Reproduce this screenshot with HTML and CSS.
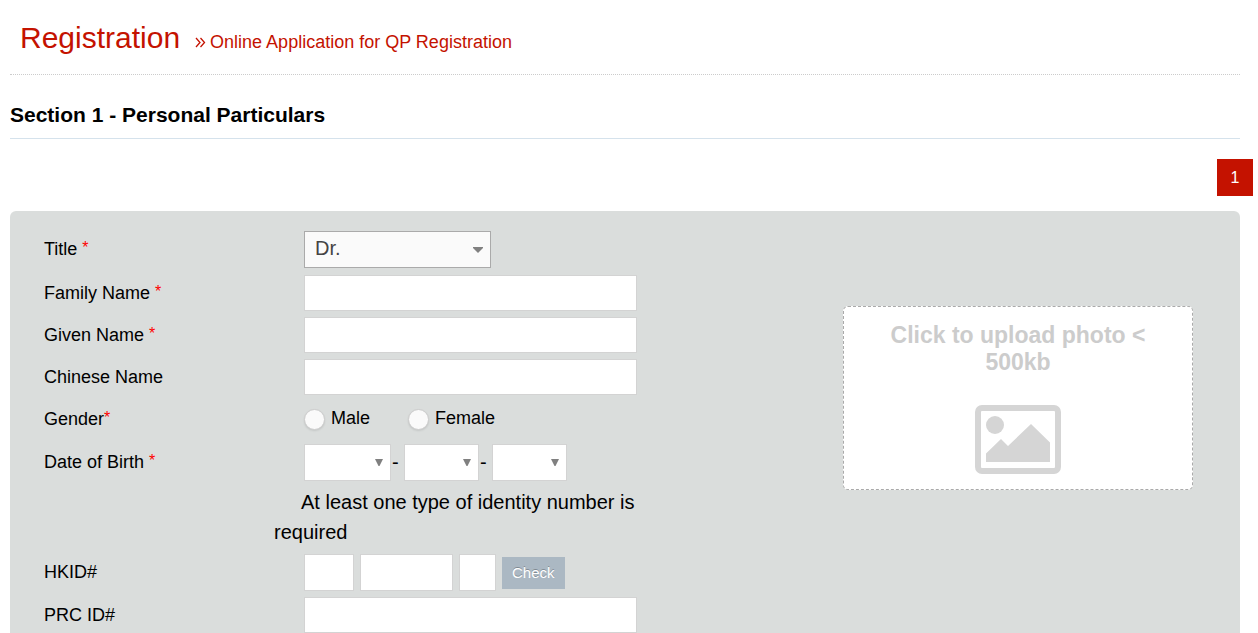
FILE: index.html
```html
<!DOCTYPE html>
<html lang="en">
<head>
<meta charset="utf-8">
<title>Online Application for QP Registration</title>
<link rel="stylesheet" href="styles.css">
</head>
<body>
<main class="page">
  <header class="page-header">
    <h1 class="page-title">Registration</h1>
    <p class="subtitle">
      <svg class="chevrons" viewBox="0 0 11 11" aria-hidden="true"><path d="M1 1 5 5.500 1 10M5.500 1 9.500 5.500 5.500 10"/></svg>
      <span>Online Application for QP Registration</span>
    </p>
  </header>
  <h2 class="section-title">Section 1 - Personal Particulars</h2>
  <nav class="pager" aria-label="Steps"><a class="step" href="#step-1">1</a></nav>

  <form class="panel" id="step-1">
    <div class="fields">
      <div class="row row-title">
        <label class="label" for="title">Title <span class="req">*</span></label>
        <div class="select-box title-box">
          <select class="control title-select" id="title"><option>Dr.</option><option>Mr.</option><option>Ms.</option></select>
          <svg class="arrow title-arrow" viewBox="0 0 10 6" aria-hidden="true"><path d="M0 0H10V1L5 6 0 1Z"/></svg>
        </div>
      </div>
      <div class="row">
        <label class="label" for="family">Family Name <span class="req">*</span></label>
        <input class="control text" id="family" type="text">
      </div>
      <div class="row">
        <label class="label" for="given">Given Name <span class="req">*</span></label>
        <input class="control text" id="given" type="text">
      </div>
      <div class="row">
        <label class="label" for="chinese">Chinese Name</label>
        <input class="control text" id="chinese" type="text">
      </div>
      <div class="row row-tall" role="radiogroup" aria-labelledby="gender-label">
        <span class="label" id="gender-label">Gender<span class="req">*</span></span>
        <div class="genders">
          <label class="choice"><input class="radio" type="radio" name="gender"><span>Male</span></label>
          <label class="choice"><input class="radio" type="radio" name="gender"><span>Female</span></label>
        </div>
      </div>
      <div class="row row-tall">
        <label class="label" for="year">Date of Birth <span class="req">*</span></label>
        <div class="date">
          <div class="select-box year"><select class="control date-select" id="year" aria-label="Year"><option></option></select><svg class="arrow" viewBox="0 0 8 7" aria-hidden="true"><path d="M0 0H8L4.500 7H3.500Z"/></svg></div>
          <span class="dash">-</span>
          <div class="select-box"><select class="control date-select" aria-label="Month"><option></option></select><svg class="arrow" viewBox="0 0 8 7" aria-hidden="true"><path d="M0 0H8L4.500 7H3.500Z"/></svg></div>
          <span class="dash">-</span>
          <div class="select-box"><select class="control date-select" aria-label="Day"><option></option></select><svg class="arrow" viewBox="0 0 8 7" aria-hidden="true"><path d="M0 0H8L4.500 7H3.500Z"/></svg></div>
        </div>
      </div>
      <p class="note">At least one type of identity number is required</p>
      <div class="row row-tall">
        <label class="label" for="hkid">HKID#</label>
        <div class="hkid">
          <input class="control prefix" id="hkid" type="text">
          <input class="control digits" type="text" aria-label="HKID digits">
          <input class="control suffix" type="text" aria-label="HKID check digit">
          <button class="check" type="button">Check</button>
        </div>
      </div>
      <div class="row">
        <label class="label" for="prc">PRC ID#</label>
        <input class="control text" id="prc" type="text">
      </div>
    </div>

    <label class="upload">
      <input class="file" type="file" accept="image/*">
      <span class="upload-text">Click to upload photo &lt; 500kb</span>
      <svg class="picture" viewBox="0 0 86 69" aria-hidden="true">
        <rect x="3" y="3" width="80" height="63" rx="4" fill="none" stroke="currentColor" stroke-width="6"/>
        <circle cx="20" cy="20" r="9" fill="currentColor"/>
        <path d="M11 57V48.500L26 34 33 41 56 19 75 37.500V57Z" fill="currentColor"/>
      </svg>
    </label>
  </form>
</main>
</body>
</html>
```
FILE: styles.css
```css
* { box-sizing: border-box; }
html { scrollbar-width: none; }
body {
  margin: 0;
  height: 100vh;
  overflow: hidden;
  background: #fff;
  color: #000;
  font: 18px/36px "Liberation Sans", Arial, sans-serif;
}
.page { padding: 0 18px 0 10px; }
.page-header {
  display: flex;
  align-items: baseline;
  gap: 15px;
  padding: 20px 10px 14px;
  border-bottom: 1px dotted #ccc;
  color: #c41200;
}
.page-title { margin: 0; font-size: 30px; font-weight: 400; }
.subtitle { display: flex; align-items: baseline; gap: 4px; margin: 0; }
.chevrons { width: 11px; height: 11px; fill: none; stroke: currentColor; stroke-width: 1.300; }
.section-title {
  margin: 0;
  padding: 22px 0 5px;
  border-bottom: 1px solid #d5e2ec;
  font-size: 21px;
}
.pager { display: flex; justify-content: flex-end; margin: 20px -13px 15px 0; }
.step {
  width: 36px;
  background: #c41200;
  color: #fff;
  font-size: 16px;
  line-height: 37px;
  text-align: center;
  text-decoration: none;
}
.panel {
  display: flex;
  justify-content: space-between;
  align-items: flex-start;
  padding: 20px 47px 20px 34px;
  border-radius: 6px 6px 0 0;
  background: #dadddc;
}
.row { display: flex; align-items: flex-start; min-height: 42px; }
.row-title { min-height: 44px; }
.row-tall { min-height: 43px; }
.label { flex: none; width: 260px; }
.req { color: red; font-size: 16px; line-height: 1; vertical-align: 2px; }
.control {
  height: 36px;
  margin: 0;
  padding: 0 8px;
  border: 1px solid #d3d3d3;
  border-radius: 0;
  background: #fff;
  color: #444;
  font: 20px "Liberation Sans", Arial, sans-serif;
}
.text { width: 333px; }
.select-box { position: relative; display: flex; width: 75px; }
.date-select, .title-select { appearance: none; width: 100%; height: 37px; }
.title-box { width: 187px; }
.title-select { padding: 0 10px 3px; border-color: #aaa; background: #fafafa; }
.arrow {
  position: absolute;
  top: 15px;
  right: 8px;
  width: 8px;
  height: 7px;
  fill: #808080;
  pointer-events: none;
}
.title-arrow { top: 16px; right: 8px; width: 10px; height: 6px; }
.genders { display: flex; gap: 38px; }
.choice { display: flex; gap: 6px; line-height: 34px; }
.radio {
  appearance: none;
  width: 21px;
  height: 21px;
  margin: 8px 0 0;
  border: 1px solid #ccc;
  border-radius: 50%;
  background: #fafafa;
  box-shadow: 0 1px 2px rgba(0, 0, 0, .1);
}
.radio:checked { background: radial-gradient(#777 40%, #fafafa 45%); }
.date { display: flex; }
.year { width: 87px; }
.dash { width: 13px; padding-left: 1px; font-size: 20px; }
.note {
  width: 364px;
  margin: 0 0 7px 230px;
  font-size: 20px;
  line-height: 30px;
  text-indent: 27px;
}
.hkid { display: flex; align-items: center; gap: 6px; }
.hkid .control { height: 37px; }
.prefix { width: 50px; }
.digits { width: 93px; }
.suffix { width: 37px; }
.check {
  height: 32px;
  padding: 0 10px;
  border: 0;
  background: #abb8c3;
  color: #fff;
  font: 15px "Liberation Sans", Arial, sans-serif;
  text-shadow: 0 -1px 0 rgba(0, 0, 0, .25);
}
.upload {
  display: flex;
  flex-direction: column;
  align-items: center;
  gap: 29px;
  width: 350px;
  margin-top: 75px;
  padding: 15px 40px;
  border: 1px dashed #aaa;
  border-radius: 5px;
  background: #fff;
  color: #ccc;
  font-size: 23px;
  font-weight: 700;
  line-height: 27px;
  text-align: center;
  cursor: pointer;
}
.file { position: absolute; width: 1px; height: 1px; opacity: 0; }
.picture { width: 86px; height: 69px; color: #d5d5d5; }
```
